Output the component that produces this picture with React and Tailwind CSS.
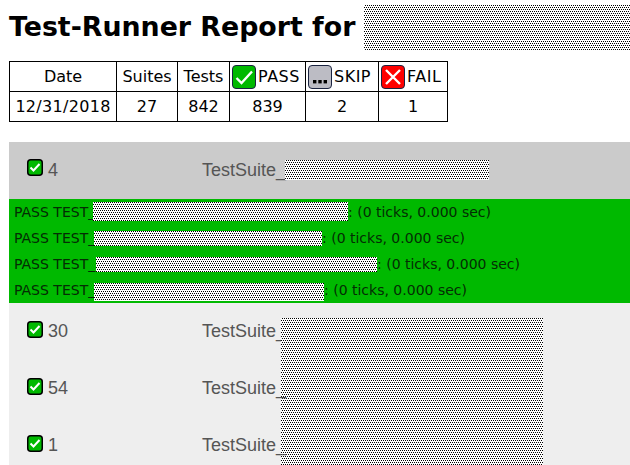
const dither = "bg-white bg-[image:conic-gradient(at_1px_1px,#000_25%,transparent_0),conic-gradient(at_1px_1px,#000_25%,transparent_0)] bg-[length:2px_4px] bg-[position:0_0,1px_2px]";

function Badge({ bg, children }) {
  return (
    <svg width="24" height="24" viewBox="0 0 24 24" className="inline-block shrink-0">
      <rect x="0.5" y="0.5" width="23" height="23" rx="3.5" fill={bg} stroke="#1a2340" />
      {children}
    </svg>
  );
}

const PassIcon = () => (
  <Badge bg="#00b900">
    <path d="M4.5 13 L9.5 18 L20 6.5" fill="none" stroke="#fff" strokeWidth="2.4" />
  </Badge>
);
const SkipIcon = () => (
  <Badge bg="#bcbcc4">
    <rect x="5" y="15" width="3.4" height="3.4" fill="#000" />
    <rect x="10.3" y="15" width="3.4" height="3.4" fill="#000" />
    <rect x="15.6" y="15" width="3.4" height="3.4" fill="#000" />
  </Badge>
);
const FailIcon = () => (
  <Badge bg="#ff0000">
    <path d="M5 5 L19 19 M19 5 L5 19" fill="none" stroke="#fff" strokeWidth="2.4" />
  </Badge>
);
const SmallPass = () => (
  <svg width="16" height="17" viewBox="0 0 16 17" className="shrink-0 mb-[5px]">
    <rect x="0.75" y="0.75" width="14.5" height="15.5" rx="3" fill="#00b900" stroke="#000" strokeWidth="1.5" />
    <path d="M3.5 8.5 L6.5 11.5 L12.5 5" fill="none" stroke="#fff" strokeWidth="2" />
  </svg>
);

const tests = [
  { tw: "w-[79px]", w: "w-[255px]", block: "mt-[3px] h-[19px]" },
  { tw: "w-[80px]", w: "w-[228px]", block: "mt-[6px] h-[15px]" },
  { tw: "w-[82px]", w: "w-[281px]", block: "mt-[6px] h-[15px]" },
  { tw: "w-[80px]", w: "w-[230px]", block: "mt-[6px] h-[18px]" },
];

const Count = ({ children, className = "" }) => (
  <div className={`flex items-center pl-[18px] gap-[5px] ${className}`}>
    <SmallPass />
    <span>{children}</span>
  </div>
);

const Cell = ({ children, className = "" }) => (
  <td className={`border border-black text-center p-0 ${className}`}>{children}</td>
);

const IconCell = ({ icon, label, className = "" }) => (
  <Cell className={className}>
    <span className="flex items-center pl-[2px] gap-[2px] tracking-[0.5px]">{icon}{label}</span>
  </Cell>
);

export default function App() {
  return (
    <div className="h-[465px] w-[630px] overflow-hidden bg-white text-black font-['DejaVu_Sans',sans-serif]">
      <div className="flex items-center h-[55px] pl-[9px]">
        <h1 className="text-[26.8px] font-bold leading-none whitespace-nowrap">Test-Runner Report for</h1>
        <div className={`${dither} ml-[9px] h-[45px] grow`} />
      </div>
      <table className="ml-[9px] mt-[6px] border-collapse text-[16px] w-[439px] table-fixed">
        <tbody>
          <tr className="h-[30px]">
            <Cell className="w-[107px] pt-[1px]">Date</Cell>
            <Cell className="w-[61px] pt-[1px]">Suites</Cell>
            <Cell className="w-[52px] pt-[1px]">Tests</Cell>
            <IconCell className="w-[76px]" icon={<PassIcon />} label="PASS" />
            <IconCell className="w-[73px]" icon={<SkipIcon />} label="SKIP" />
            <IconCell icon={<FailIcon />} label="FAIL" />
          </tr>
          <tr className="h-[30px]">
            <Cell className="tracking-[0.3px]">12/31/2018</Cell>
            <Cell>27</Cell>
            <Cell>842</Cell>
            <Cell>839</Cell>
            <Cell>2</Cell>
            <Cell>1</Cell>
          </tr>
        </tbody>
      </table>
      <div className="ml-[9px] mt-[20px] bg-[#eeeeee] text-[#555555] text-[18px] font-['Liberation_Sans',sans-serif]">
        <div className="grid grid-cols-[193px_83px_204px] items-center h-[57px] pb-[2px] bg-[#cbcbcb]">
          <Count className="pt-[1px]">4</Count>
          <span className="pt-[1px]">TestSuite_</span>
          <div className={`${dither} h-[20px]`} />
        </div>
        <div className="bg-[#00b900] text-[14px] text-[#042c04] font-['DejaVu_Sans',sans-serif] pl-[5px]">
          {tests.map((t, i) => (
            <div key={i} className="flex items-start h-[26px]">
              <span className={`${t.tw} leading-[26px] shrink-0 whitespace-nowrap`}>PASS TEST_</span>
              <div className={`${dither} ${t.w} ${t.block}`} />
              <span className="leading-[26px] whitespace-pre">: (0 ticks, 0.000 sec)</span>
            </div>
          ))}
        </div>
        <div className="grid grid-cols-[193px_79px_262px] grid-rows-[57px_57px_57px] items-center pb-[2px] h-[162px] overflow-hidden">
          <Count>30</Count>
          <span className="whitespace-nowrap">TestSuite_</span>
          <div className={`${dither} row-span-3 self-start mt-[15px] h-[160px]`} />
          <Count>54</Count>
          <span className="whitespace-nowrap">TestSuite_</span>
          <Count>1</Count>
          <span className="whitespace-nowrap">TestSuite_</span>
        </div>
      </div>
    </div>
  );
}
